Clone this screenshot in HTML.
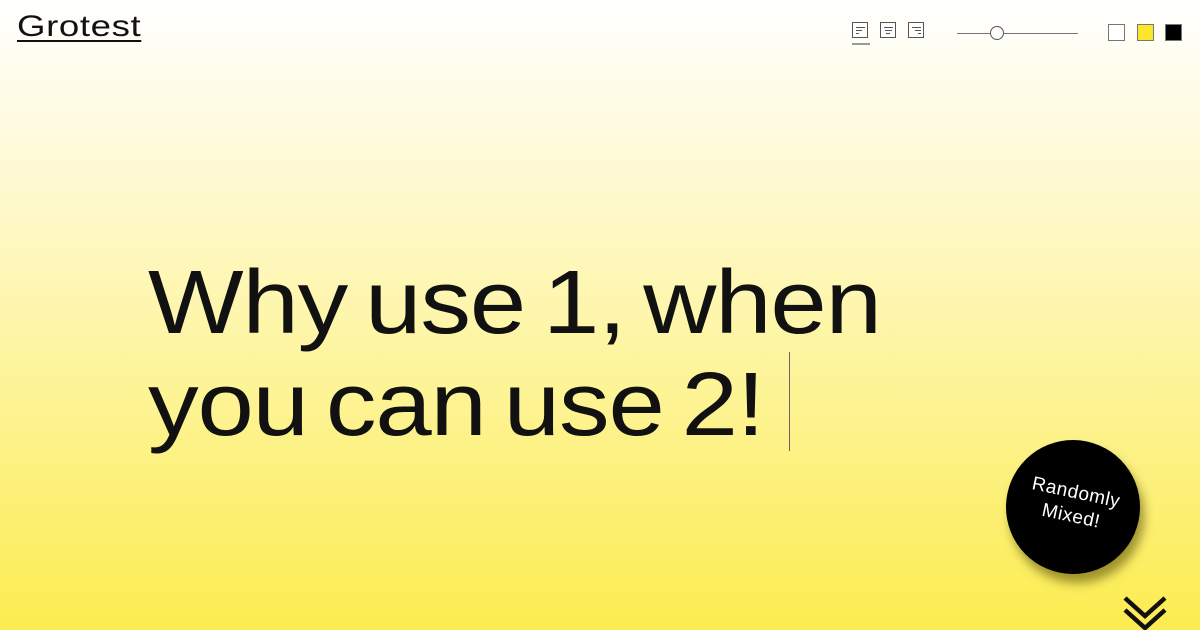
<!DOCTYPE html>
<html><head><style>
body{margin:0;width:1200px;height:630px;overflow:hidden;position:relative;font-family:"Liberation Sans",sans-serif;
background:linear-gradient(to bottom,#ffffff 0%,#fffbe0 20%,#fdf49a 60%,#fcec50 100%);}
.logo{position:absolute;left:17px;top:10px;font-size:30px;color:#111;text-decoration:underline;text-decoration-thickness:2px;text-underline-offset:4px;letter-spacing:0.5px;transform:scaleX(1.22);transform-origin:left top}
.ic{position:absolute;top:22px;width:16px;height:16px;border:1px solid #555;box-sizing:border-box;background:#fff}
.ic i{position:absolute;height:1px;background:#555}
.h{position:absolute;left:148px;top:252px;font-size:90px;line-height:102px;color:#111;letter-spacing:-1px;word-spacing:-8px;white-space:nowrap;transform:scaleX(1.125);transform-origin:left top}
.cur{position:absolute;left:789px;top:352px;width:1px;height:99px;background:#666}
.c{position:absolute;left:1006px;top:440px;width:134px;height:134px;border-radius:50%;background:#000;box-shadow:6px 8px 10px rgba(80,70,0,.55);color:#fff;text-align:center;font-size:19px;line-height:24px;box-sizing:border-box;padding-top:41px;transform:rotate(12deg);letter-spacing:0.5px}
.sw{position:absolute;top:24px;width:17px;height:17px;box-sizing:border-box;border:1px solid #777}
</style></head><body>
<div class="logo">Grotest</div>
<div class="ic" style="left:852px"><i style="left:3px;top:4px;width:9px"></i><i style="left:3px;top:7px;width:6px"></i><i style="left:3px;top:10px;width:3px"></i></div>
<div style="position:absolute;left:852px;top:43px;width:18px;height:2px;background:#999"></div>
<div class="ic" style="left:880px"><i style="left:3px;top:4px;width:9px"></i><i style="left:4px;top:7px;width:7px"></i><i style="left:5px;top:10px;width:4px"></i></div>
<div class="ic" style="left:908px"><i style="left:3px;top:4px;width:9px"></i><i style="left:6px;top:7px;width:6px"></i><i style="left:9px;top:10px;width:3px"></i></div>
<div style="position:absolute;left:957px;top:33px;width:121px;height:1px;background:#777"></div>
<div style="position:absolute;left:990px;top:26px;width:14px;height:14px;border-radius:50%;border:1px solid #555;background:#fff;box-sizing:border-box"></div>
<div class="sw" style="left:1108px;background:#fff"></div>
<div class="sw" style="left:1137px;background:#fbe62a"></div>
<div class="sw" style="left:1165px;background:#000"></div>
<div class="h">Why use 1, when<br>you can use 2!</div>
<div class="cur"></div>
<div class="c">Randomly<br>Mixed!</div>
<svg style="position:absolute;left:1122px;top:594px" width="46" height="36" viewBox="0 0 46 36"><path d="M3 4 L23 22 L43 4 M3 16 L23 34 L43 16" stroke="#111" stroke-width="4.5" fill="none"/></svg>
</body></html>
